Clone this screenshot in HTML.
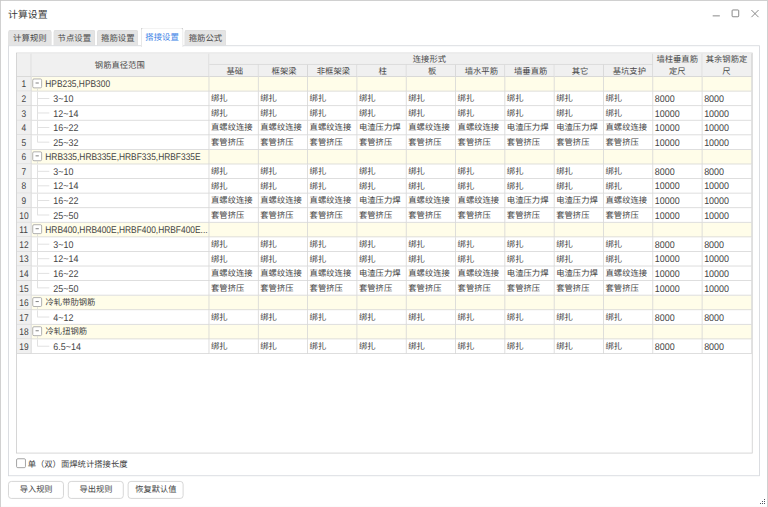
<!DOCTYPE html>
<html lang="zh-CN">
<head>
<meta charset="utf-8">
<title>计算设置</title>
<style>
html,body{margin:0;padding:0;background:#fff;}
body{width:768px;height:507px;overflow:hidden;position:relative;font-family:"Liberation Sans",sans-serif;}
#win{text-rendering:geometricPrecision;position:absolute;left:0;top:0;width:950px;height:627px;transform:scale(0.80842,0.8098);transform-origin:0 0;background:#fff;box-sizing:border-box;border:1.3px solid #c6c6c6;border-bottom-width:1.5px;font-size:10.2px;color:#444;}
#win *{box-sizing:border-box;}
.abs{position:absolute;}
.title{position:absolute;left:9px;top:9.1px;font-size:12.2px;line-height:16px;color:#3a3a3a;}
.tab{position:absolute;top:36.3px;height:19.7px;width:52px;background:#e4e4e4;border:1px solid #dcdcdc;border-bottom:none;border-radius:3px 3px 0 0;text-align:center;line-height:21px;color:#4a4a4a;font-size:10.4px;}
.tab.on{top:33px;height:24px;background:#fff;border:1px solid #cfcfcf;border-bottom:none;color:#3b82e6;line-height:24px;z-index:3;}
.pane{position:absolute;left:9.4px;top:55px;width:929.6px;height:532.4px;border:1px solid #d3d6db;background:#fff;}
.grid{position:absolute;left:18.7px;top:63.5px;width:911px;height:495.7px;border:1px solid #cdcdcd;background:#fff;overflow:hidden;}
.hd{position:absolute;left:0;top:0;width:909px;height:29px;background:#f0f0f0;}
.h{position:absolute;background:#f0f0f0;border-right:1px solid #d2d2d2;border-bottom:1px solid #d2d2d2;text-align:center;color:#4a4a4a;font-size:10.3px;line-height:17.5px;overflow:hidden;white-space:nowrap;}
.h.s{top:14.5px;width:61px;height:14.5px;padding-left:3.5px;}
.h.two{white-space:normal;line-height:14.8px;padding:2px 4px 0;top:0;height:29px;width:61px;}
.rows{position:absolute;left:0;top:29px;width:909px;}
.r{height:18px;width:909px;display:flex;background:#fff;}
.r.g{background:#fffde9;}
.r>div{height:18px;border-right:1px solid #d6d6d6;border-bottom:1px solid #d6d6d6;line-height:19.6px;font-size:10.3px;white-space:nowrap;overflow:hidden;flex:none;}
.n{width:18px;background:#f0f0f0;text-align:center;color:#444;}
.c{width:61px;padding-left:2.3px;}
.c.last{width:61px;}
.c.num{padding-left:2.4px;}
.c1{width:220px;position:relative;padding-left:0;}
.c1 .t{position:absolute;left:17.6px;top:0.5px;}
.c1 .t.k{left:27.5px;transform:scaleX(.92);}
.num .la{transform:scaleX(.92);}
.la{display:inline-block;vertical-align:top;line-height:18.6px;font-size:12px;transform:scaleX(.865);transform-origin:0 50%;}
.n .la{transform-origin:50% 50%;}
.n.d2{padding-left:1px;}
.bx{position:absolute;left:1.8px;top:2.6px;width:11.6px;height:11.6px;border:1px solid #a0a0a0;border-radius:2px;background:#fff;}
.bx i{position:absolute;left:2.8px;top:4.3px;width:4px;height:1px;background:#666;}
.vl{position:absolute;left:7px;top:14px;width:1px;height:4px;background:#dadada;}
.tv{position:absolute;left:7px;top:0;width:1px;height:18px;background:#dadada;}
.tv.end{height:9px;}
.th{position:absolute;left:8px;top:8px;width:14px;height:1px;background:#dadada;}
.cb{position:absolute;left:19.2px;top:565.3px;width:11.6px;height:11.3px;border:1px solid #8f8f8f;border-radius:2px;background:#fff;}
.cbl{position:absolute;left:33.2px;top:565.9px;line-height:16px;font-size:10.3px;color:#444;white-space:nowrap;}
.btn{position:absolute;top:592.6px;height:22.5px;width:68.6px;border:1px solid #cdcdcd;border-radius:4px;background:#fff;text-align:center;line-height:22.6px;font-size:10.2px;color:#444;}
.dot{position:absolute;width:2px;height:2px;background:#50545f;border-radius:0.5px;}
</style>
</head>
<body>
<div id="win">
<div class="title">计算设置</div>
<svg class="abs" style="left:875px;top:6px" width="70" height="22" viewBox="0 0 70 22" fill="none" stroke="#7a7a7a" stroke-width="1.1">
<path d="M5.6 12.6H14.4"/>
<rect x="29.6" y="5.3" width="8.2" height="8.4" rx="1"/>
<path d="M53.5 5.4L62.3 14.2M62.3 5.4L53.5 14.2"/>
</svg>
<div class="tab" style="left:9px;width:54px">计算规则</div>
<div class="tab" style="left:65px">节点设置</div>
<div class="tab" style="left:119px;width:51.4px">箍筋设置</div>
<div class="tab on" style="left:173px;width:53px">搭接设置</div>
<div class="tab" style="left:227.4px;width:51.5px">箍筋公式</div>
<div class="pane"></div>
<div class="grid">
<div class="hd">
<div class="h" style="left:0;top:0;width:18px;height:29px"></div>
<div class="h" style="left:18px;top:0;width:220px;height:29px;line-height:31px">钢筋直径范围</div>
<div class="h" style="left:238px;top:0;width:549px;height:14.5px;padding-right:3px">连接形式</div>
<div class="h s" style="left:238px">基础</div><div class="h s" style="left:299px">框架梁</div><div class="h s" style="left:360px">非框架梁</div><div class="h s" style="left:421px">柱</div><div class="h s" style="left:482px">板</div><div class="h s" style="left:543px">墙水平筋</div><div class="h s" style="left:604px">墙垂直筋</div><div class="h s" style="left:665px">其它</div><div class="h s" style="left:726px">基坑支护</div>
<div class="h two" style="left:787px">墙柱垂直筋定尺</div>
<div class="h two" style="left:848px">其余钢筋定尺</div>
</div>
<div class="rows">
<div class="r g"><div class="n"><span class="la">1</span></div><div class="c c1"><span class="bx"><i></i></span><span class="vl"></span><span class="t la">HPB235,HPB300</span></div><div class="c"></div><div class="c"></div><div class="c"></div><div class="c"></div><div class="c"></div><div class="c"></div><div class="c"></div><div class="c"></div><div class="c"></div><div class="c"></div><div class="c last"></div></div>
<div class="r"><div class="n"><span class="la">2</span></div><div class="c c1"><span class="tv"></span><span class="th"></span><span class="t k la">3~10</span></div><div class="c">绑扎</div><div class="c">绑扎</div><div class="c">绑扎</div><div class="c">绑扎</div><div class="c">绑扎</div><div class="c">绑扎</div><div class="c">绑扎</div><div class="c">绑扎</div><div class="c">绑扎</div><div class="c num"><span class="la">8000</span></div><div class="c last num"><span class="la">8000</span></div></div>
<div class="r"><div class="n"><span class="la">3</span></div><div class="c c1"><span class="tv"></span><span class="th"></span><span class="t k la">12~14</span></div><div class="c">绑扎</div><div class="c">绑扎</div><div class="c">绑扎</div><div class="c">绑扎</div><div class="c">绑扎</div><div class="c">绑扎</div><div class="c">绑扎</div><div class="c">绑扎</div><div class="c">绑扎</div><div class="c num"><span class="la">10000</span></div><div class="c last num"><span class="la">10000</span></div></div>
<div class="r"><div class="n"><span class="la">4</span></div><div class="c c1"><span class="tv"></span><span class="th"></span><span class="t k la">16~22</span></div><div class="c">直螺纹连接</div><div class="c">直螺纹连接</div><div class="c">直螺纹连接</div><div class="c">电渣压力焊</div><div class="c">直螺纹连接</div><div class="c">直螺纹连接</div><div class="c">电渣压力焊</div><div class="c">电渣压力焊</div><div class="c">直螺纹连接</div><div class="c num"><span class="la">10000</span></div><div class="c last num"><span class="la">10000</span></div></div>
<div class="r"><div class="n"><span class="la">5</span></div><div class="c c1"><span class="tv end"></span><span class="th"></span><span class="t k la">25~32</span></div><div class="c">套管挤压</div><div class="c">套管挤压</div><div class="c">套管挤压</div><div class="c">套管挤压</div><div class="c">套管挤压</div><div class="c">套管挤压</div><div class="c">套管挤压</div><div class="c">套管挤压</div><div class="c">套管挤压</div><div class="c num"><span class="la">10000</span></div><div class="c last num"><span class="la">10000</span></div></div>
<div class="r g"><div class="n"><span class="la">6</span></div><div class="c c1"><span class="bx"><i></i></span><span class="vl"></span><span class="t la">HRB335,HRB335E,HRBF335,HRBF335E</span></div><div class="c"></div><div class="c"></div><div class="c"></div><div class="c"></div><div class="c"></div><div class="c"></div><div class="c"></div><div class="c"></div><div class="c"></div><div class="c"></div><div class="c last"></div></div>
<div class="r"><div class="n"><span class="la">7</span></div><div class="c c1"><span class="tv"></span><span class="th"></span><span class="t k la">3~10</span></div><div class="c">绑扎</div><div class="c">绑扎</div><div class="c">绑扎</div><div class="c">绑扎</div><div class="c">绑扎</div><div class="c">绑扎</div><div class="c">绑扎</div><div class="c">绑扎</div><div class="c">绑扎</div><div class="c num"><span class="la">8000</span></div><div class="c last num"><span class="la">8000</span></div></div>
<div class="r"><div class="n"><span class="la">8</span></div><div class="c c1"><span class="tv"></span><span class="th"></span><span class="t k la">12~14</span></div><div class="c">绑扎</div><div class="c">绑扎</div><div class="c">绑扎</div><div class="c">绑扎</div><div class="c">绑扎</div><div class="c">绑扎</div><div class="c">绑扎</div><div class="c">绑扎</div><div class="c">绑扎</div><div class="c num"><span class="la">10000</span></div><div class="c last num"><span class="la">10000</span></div></div>
<div class="r"><div class="n"><span class="la">9</span></div><div class="c c1"><span class="tv"></span><span class="th"></span><span class="t k la">16~22</span></div><div class="c">直螺纹连接</div><div class="c">直螺纹连接</div><div class="c">直螺纹连接</div><div class="c">电渣压力焊</div><div class="c">直螺纹连接</div><div class="c">直螺纹连接</div><div class="c">电渣压力焊</div><div class="c">电渣压力焊</div><div class="c">直螺纹连接</div><div class="c num"><span class="la">10000</span></div><div class="c last num"><span class="la">10000</span></div></div>
<div class="r"><div class="n d2"><span class="la">10</span></div><div class="c c1"><span class="tv end"></span><span class="th"></span><span class="t k la">25~50</span></div><div class="c">套管挤压</div><div class="c">套管挤压</div><div class="c">套管挤压</div><div class="c">套管挤压</div><div class="c">套管挤压</div><div class="c">套管挤压</div><div class="c">套管挤压</div><div class="c">套管挤压</div><div class="c">套管挤压</div><div class="c num"><span class="la">10000</span></div><div class="c last num"><span class="la">10000</span></div></div>
<div class="r g"><div class="n d2"><span class="la">11</span></div><div class="c c1"><span class="bx"><i></i></span><span class="vl"></span><span class="t la">HRB400,HRB400E,HRBF400,HRBF400E...</span></div><div class="c"></div><div class="c"></div><div class="c"></div><div class="c"></div><div class="c"></div><div class="c"></div><div class="c"></div><div class="c"></div><div class="c"></div><div class="c"></div><div class="c last"></div></div>
<div class="r"><div class="n d2"><span class="la">12</span></div><div class="c c1"><span class="tv"></span><span class="th"></span><span class="t k la">3~10</span></div><div class="c">绑扎</div><div class="c">绑扎</div><div class="c">绑扎</div><div class="c">绑扎</div><div class="c">绑扎</div><div class="c">绑扎</div><div class="c">绑扎</div><div class="c">绑扎</div><div class="c">绑扎</div><div class="c num"><span class="la">8000</span></div><div class="c last num"><span class="la">8000</span></div></div>
<div class="r"><div class="n d2"><span class="la">13</span></div><div class="c c1"><span class="tv"></span><span class="th"></span><span class="t k la">12~14</span></div><div class="c">绑扎</div><div class="c">绑扎</div><div class="c">绑扎</div><div class="c">绑扎</div><div class="c">绑扎</div><div class="c">绑扎</div><div class="c">绑扎</div><div class="c">绑扎</div><div class="c">绑扎</div><div class="c num"><span class="la">10000</span></div><div class="c last num"><span class="la">10000</span></div></div>
<div class="r"><div class="n d2"><span class="la">14</span></div><div class="c c1"><span class="tv"></span><span class="th"></span><span class="t k la">16~22</span></div><div class="c">直螺纹连接</div><div class="c">直螺纹连接</div><div class="c">直螺纹连接</div><div class="c">电渣压力焊</div><div class="c">直螺纹连接</div><div class="c">直螺纹连接</div><div class="c">电渣压力焊</div><div class="c">电渣压力焊</div><div class="c">直螺纹连接</div><div class="c num"><span class="la">10000</span></div><div class="c last num"><span class="la">10000</span></div></div>
<div class="r"><div class="n d2"><span class="la">15</span></div><div class="c c1"><span class="tv end"></span><span class="th"></span><span class="t k la">25~50</span></div><div class="c">套管挤压</div><div class="c">套管挤压</div><div class="c">套管挤压</div><div class="c">套管挤压</div><div class="c">套管挤压</div><div class="c">套管挤压</div><div class="c">套管挤压</div><div class="c">套管挤压</div><div class="c">套管挤压</div><div class="c num"><span class="la">10000</span></div><div class="c last num"><span class="la">10000</span></div></div>
<div class="r g"><div class="n d2"><span class="la">16</span></div><div class="c c1"><span class="bx"><i></i></span><span class="vl"></span><span class="t ">冷轧带肋钢筋</span></div><div class="c"></div><div class="c"></div><div class="c"></div><div class="c"></div><div class="c"></div><div class="c"></div><div class="c"></div><div class="c"></div><div class="c"></div><div class="c"></div><div class="c last"></div></div>
<div class="r"><div class="n d2"><span class="la">17</span></div><div class="c c1"><span class="tv end"></span><span class="th"></span><span class="t k la">4~12</span></div><div class="c">绑扎</div><div class="c">绑扎</div><div class="c">绑扎</div><div class="c">绑扎</div><div class="c">绑扎</div><div class="c">绑扎</div><div class="c">绑扎</div><div class="c">绑扎</div><div class="c">绑扎</div><div class="c num"><span class="la">8000</span></div><div class="c last num"><span class="la">8000</span></div></div>
<div class="r g"><div class="n d2"><span class="la">18</span></div><div class="c c1"><span class="bx"><i></i></span><span class="vl"></span><span class="t ">冷轧扭钢筋</span></div><div class="c"></div><div class="c"></div><div class="c"></div><div class="c"></div><div class="c"></div><div class="c"></div><div class="c"></div><div class="c"></div><div class="c"></div><div class="c"></div><div class="c last"></div></div>
<div class="r"><div class="n d2"><span class="la">19</span></div><div class="c c1"><span class="tv end"></span><span class="th"></span><span class="t k la">6.5~14</span></div><div class="c">绑扎</div><div class="c">绑扎</div><div class="c">绑扎</div><div class="c">绑扎</div><div class="c">绑扎</div><div class="c">绑扎</div><div class="c">绑扎</div><div class="c">绑扎</div><div class="c">绑扎</div><div class="c num"><span class="la">8000</span></div><div class="c last num"><span class="la">8000</span></div></div>
</div>
</div>
<div class="cb"></div>
<div class="cbl">单（双）面焊统计搭接长度</div>
<div class="btn" style="left:9.4px">导入规则</div>
<div class="btn" style="left:83.4px">导出规则</div>
<div class="btn" style="left:157.4px">恢复默认值</div>
</div>
<svg style="position:absolute;left:756px;top:495px" width="12" height="12" viewBox="756 495 12 12" fill="#50545f" shape-rendering="crispEdges"><rect x="764" y="499" width="1" height="1"/><rect x="762" y="501" width="1" height="1"/><rect x="764" y="501" width="1" height="1"/><rect x="760" y="503" width="1" height="1"/><rect x="762" y="503" width="1" height="1"/><rect x="764" y="503" width="1" height="1"/></svg>
</body>
</html>
